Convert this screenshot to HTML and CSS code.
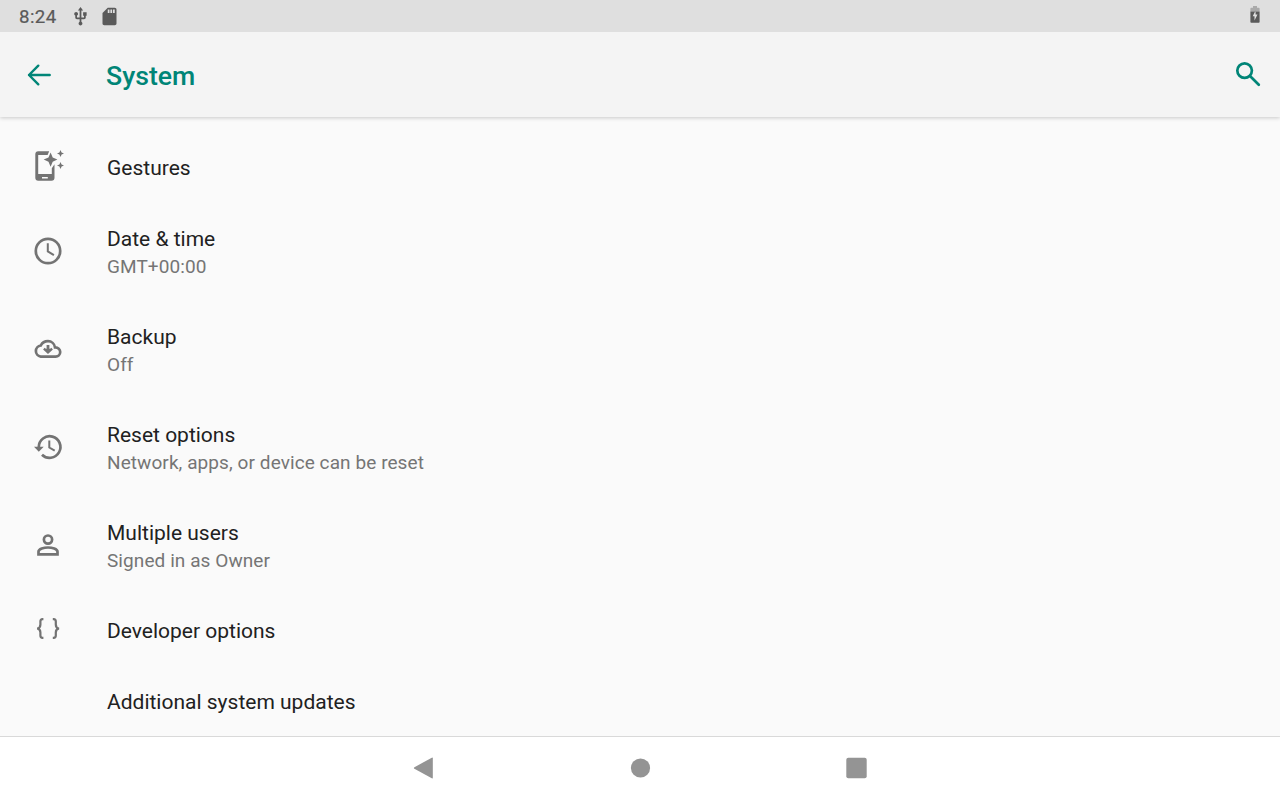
FILE: index.html
```html
<!DOCTYPE html>
<html lang="en">
<head>
<meta charset="utf-8">
<title>System</title>
<link rel="stylesheet" href="styles.css">
</head>
<body>
<div class="status">
  <span class="time">8:24</span>
  <svg class="usb" viewBox="0 0 24 24"><path d="M15 7v4h1v2h-3V5h2l-3-4-3 4h2v8H8v-2.07c.7-.37 1.2-1.08 1.2-1.93 0-1.21-.99-2.2-2.2-2.2S4.800 7.790 4.800 9c0 .85.5 1.560 1.200 1.930V13c0 1.110.890 2 2 2h3v3.050c-.71.370-1.200 1.100-1.200 1.950 0 1.220.990 2.200 2.200 2.200s2.200-.98 2.200-2.200c0-.85-.49-1.580-1.200-1.950V15h3c1.110 0 2-.89 2-2v-2h1V7z"/></svg>
  <svg class="sd" viewBox="0 0 24 24"><path d="M18 2h-8L4 8v12c0 1.100.900 2 2 2h12c1.100 0 2-.9 2-2V4c0-1.100-.9-2-2-2zm-6 6h-2V4h2zm3 0h-2V4h2zm3 0h-2V4h2z"/></svg>
  <svg class="battery" viewBox="0 0 10 17"><path opacity=".4" d="M.4 5.500V2.500q0-.8.800-.8H3V0h4v1.700h1.800q.8 0 .8.800v3z"/><path fill-rule="evenodd" d="M.4 5.500h9.200V16q0 .8-.8.800H1.200Q.4 16.800.4 16zM5.600 4.500 2.700 10.200h1.800v4.300l3-5.900H5.600z"/></svg>
</div>
<header class="appbar">
  <svg class="back" viewBox="0 0 32 32"><path d="M26.700 16H6M15.300 6.700 6 16l9.300 9.300"/></svg>
  <h1>System</h1>
  <svg class="search" viewBox="0 0 32 32"><circle cx="12.600" cy="12.600" r="7.300"/><path d="m18 18 8.800 8.800"/></svg>
</header>
<main class="list">
  <div class="row single">
    <svg class="icon" viewBox="0 0 32 32"><path fill-rule="evenodd" d="M6.300 1.200H17.200L15.600 4.900H6.200V24H19.800V18.200L22.500 14.300V27.700q0 3-3 3H6.300q-3 0-3-3V4.200q0-3 3-3zM10 27.100v1.300h5.800v-1.300z"/><path d="M18.600 2.600 20.700 7.600 25.400 9.600 20.700 11.700 18.600 16.700 16.500 11.700 11.700 9.600 16.500 7.600zM28.500 0l1.100 2.400L32 3.500l-2.400 1.100L28.500 7l-1.100-2.400L25 3.500l2.400-1.100zM28.500 12l1.100 2.400 2.400 1.100-2.400 1.100-1.100 2.400-1.100-2.400L25 15.500l2.400-1.100z"/></svg>
    <div class="label">Gestures</div>
  </div>
  <div class="row">
    <svg class="icon" viewBox="0 0 32 32"><circle class="line" cx="16" cy="16" r="12.200"/><path class="hand" d="M15.800 8.300V16.400l6.100 3.700"/></svg>
    <div class="text"><div class="label">Date &amp; time</div><div class="summary">GMT+00:00</div></div>
  </div>
  <div class="row">
    <svg class="icon" viewBox="0 0 32 32"><path class="line" d="M8.700 23.600A5.600 5.600 0 0 1 8.800 12.500Q10.900 8.200 16 8.200c3.500 0 6.500 2.500 7 6.200 3.100-.1 5.200 2 5.200 4.600s-2 4.600-4.600 4.600z"/><path d="M14.600 12h2.800v3.800h.8l1.100-1 1.600 1.600L16 20.900l-4.900-4.500 1.600-1.600 1.100 1h.8z"/></svg>
    <div class="text"><div class="label">Backup</div><div class="summary">Off</div></div>
  </div>
  <div class="row">
    <svg class="icon" viewBox="0 0 32 32"><path class="line" d="M6.800 17v-1A10.800 10.800 0 1 1 10 23.700"/><path d="M2 15.800h9.700l-4.900 5z"/><path class="hand" d="M17.300 9.500v7l5.400 3.200"/></svg>
    <div class="text"><div class="label">Reset options</div><div class="summary">Network, apps, or device can be reset</div></div>
  </div>
  <div class="row">
    <svg class="icon" viewBox="0 0 32 32"><circle class="line" cx="16" cy="10.600" r="4.100"/><path class="line" d="M6.500 25.400v-2.600c0-2.800 5.500-4.300 9.500-4.300s9.500 1.500 9.500 4.300v2.600z"/></svg>
    <div class="text"><div class="label">Multiple users</div><div class="summary">Signed in as Owner</div></div>
  </div>
  <div class="row single">
    <svg class="icon" viewBox="0 0 32 32"><path class="brace" d="M11.400 6.100H10.600Q8.400 6.100 8.400 8.500v3q0 3.500-3.200 4 3.200.5 3.200 4v3q0 2.300 2.200 2.300h.8M20.800 6.100h.8q2.200 0 2.200 2.400v3q0 3.500 3.200 4-3.200.5-3.200 4v3q0 2.300-2.200 2.300h-.8"/></svg>
    <div class="label">Developer options</div>
  </div>
  <div class="row single">
    <div class="icon"></div>
    <div class="label">Additional system updates</div>
  </div>
</main>
<nav class="nav">
  <svg viewBox="0 0 24 24"><path d="M20.800 2.200v19.600q0 1-1 .5L2.400 12.800q-1-.8 0-1.600L19.800 1.700q1-.5 1 .5z"/></svg>
  <svg viewBox="0 0 24 24"><circle cx="12.500" cy="12" r="9.600"/></svg>
  <svg viewBox="0 0 24 24"><rect x="2.300" y="1.800" width="20.400" height="20.400" rx="2"/></svg>
</nav>
</body>
</html>
```
FILE: styles.css
```css
* { box-sizing: border-box; }
body {
  margin: 0;
  width: 1280px;
  height: 800px;
  overflow: hidden;
  display: flex;
  flex-direction: column;
  background: #fafafa;
  font-family: Roboto, sans-serif;
}
svg { display: block; flex: none; }
.status {
  height: 32px;
  flex: none;
  display: flex;
  align-items: center;
  padding: 0 20px 0 19px;
  background: #dfdfdf;
  color: #5a5a5a;
  fill: #5a5a5a;
  position: relative;
  z-index: 1;
}
.time { width: 51px; font-size: 18.67px; font-weight: 400; letter-spacing: .4px; line-height: 32px; padding-top: 1px; -webkit-text-stroke: .2px #5a5a5a; }
.usb { width: 21px; height: 21px; }
.sd { width: 21px; height: 21px; margin-left: 8px; }
.battery { width: 10px; height: 17px; margin-left: auto; margin-top: -3px; }
.appbar {
  height: 85px;
  flex: none;
  display: flex;
  align-items: center;
  padding: 0 16px 0 22.5px;
  background: #f4f4f4;
  box-shadow: 0 1px 4px rgba(0, 0, 0, .2);
  color: #008577;
}
.back, .search { width: 32px; height: 32px; fill: none; stroke: #008577; stroke-width: 2.7; stroke-linecap: round; stroke-linejoin: round; }
.back { stroke-width: 2.4; }
.search { margin-top: -2px; }
.appbar h1 { margin: 3px auto 0 51.5px; font-size: 26.67px; line-height: 32px; font-weight: 500; }
.list { flex: 1; min-height: 0; padding-top: 14px; }
.row { height: 98px; display: flex; align-items: center; padding-left: 32px; }
.row.single { height: 71px; }
.icon { width: 32px; height: 32px; margin-right: 43px; fill: #737373; }
.line { fill: none; stroke: #737373; stroke-width: 2.7; }
.hand { fill: none; stroke: #737373; stroke-width: 2; }
.brace { fill: none; stroke: #737373; stroke-width: 2.2; }
.label { font-size: 21px; line-height: 28px; color: #212121; }
.single .label { padding-top: 3px; }
.single .icon { margin-top: -1px; }
.text { padding-top: 3px; }
.summary { font-size: 19px; line-height: 26px; color: #757575; margin-top: 1px; letter-spacing: .08px; }
.nav {
  height: 64px;
  flex: none;
  display: flex;
  justify-content: center;
  align-items: center;
  gap: 192px;
  padding-bottom: 1px;
  background: #fff;
  border-top: 1px solid #d9d9d9;
  fill: #949494;
}
.nav svg { width: 24px; height: 24px; }
```
